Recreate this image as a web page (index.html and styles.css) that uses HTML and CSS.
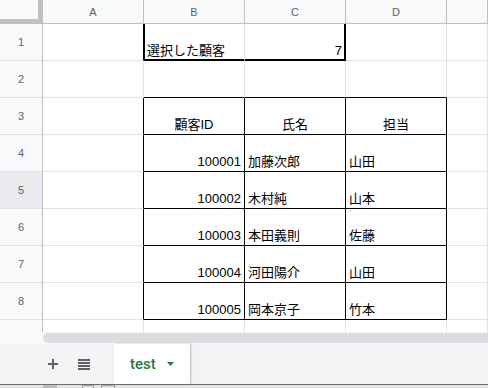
FILE: index.html
```html
<!DOCTYPE html>
<html lang="ja">
<head>
    <meta charset="UTF-8">
    <title>test</title>
    <link rel="stylesheet" href="styles.css">
</head>
<body>
    <div class="sheet">
        <div class="grid">
            <!-- column headers -->
            <div class="corner"></div>
            <div class="ch">A</div>
            <div class="ch">B</div>
            <div class="ch">C</div>
            <div class="ch">D</div>
            <div class="ch"></div>

            <!-- row 1 -->
            <div class="rh">1</div>
            <div class="c br"></div>
            <div class="c sel-l">選択した顧客</div>
            <div class="c sel-r num">7</div>
            <div class="c"></div>
            <div class="c"></div>

            <!-- row 2 -->
            <div class="rh">2</div>
            <div class="c"></div>
            <div class="c bb"></div>
            <div class="c bb"></div>
            <div class="c bb"></div>
            <div class="c"></div>

            <!-- row 3 -->
            <div class="rh">3</div>
            <div class="c br"></div>
            <div class="c br bb ctr">顧客ID</div>
            <div class="c br bb ctr">氏名</div>
            <div class="c br bb ctr">担当</div>
            <div class="c"></div>

            <!-- row 4 -->
            <div class="rh">4</div>
            <div class="c br"></div>
            <div class="c br bb num">100001</div>
            <div class="c br bb">加藤次郎</div>
            <div class="c br bb">山田</div>
            <div class="c"></div>

            <!-- row 5 -->
            <div class="rh hover">5</div>
            <div class="c br"></div>
            <div class="c br bb num">100002</div>
            <div class="c br bb">木村純</div>
            <div class="c br bb">山本</div>
            <div class="c"></div>

            <!-- row 6 -->
            <div class="rh">6</div>
            <div class="c br"></div>
            <div class="c br bb num">100003</div>
            <div class="c br bb">本田義則</div>
            <div class="c br bb">佐藤</div>
            <div class="c"></div>

            <!-- row 7 -->
            <div class="rh">7</div>
            <div class="c br"></div>
            <div class="c br bb num">100004</div>
            <div class="c br bb">河田陽介</div>
            <div class="c br bb">山田</div>
            <div class="c"></div>

            <!-- row 8 -->
            <div class="rh">8</div>
            <div class="c br"></div>
            <div class="c br bb num">100005</div>
            <div class="c br bb">岡本京子</div>
            <div class="c br bb">竹本</div>
            <div class="c"></div>

            <!-- row 9 (cut off by the scrollbar) -->
            <div class="rh"></div>
            <div class="c"></div>
            <div class="c"></div>
            <div class="c"></div>
            <div class="c"></div>
            <div class="c"></div>
        </div>

        <div class="scroll"><div class="thumb"></div></div>

        <div class="tabs">
            <div class="tab-tools">
                <svg width="10" height="10" viewBox="0 0 10 10">
                    <path d="M5 0v10M0 5h10" stroke="#5f6368" stroke-width="2"/>
                </svg>
                <svg width="12" height="11" viewBox="0 0 12 11">
                    <path d="M0 1h12M0 4h12M0 7h12M0 10h12" stroke="#5f6368" stroke-width="2"/>
                </svg>
            </div>
            <div class="tab">
                <span>test</span>
                <svg width="7" height="4" viewBox="0 0 7 4">
                    <path d="M0 0h7L3.5 4z" fill="#188038"/>
                </svg>
            </div>
        </div>

        <div class="taskbar">
            <div class="task-block"></div>
            <div class="task-icon"></div>
            <div class="task-icon wide"></div>
        </div>
    </div>
</body>
</html>
```

FILE: styles.css
```css
body {
    margin: 0;
    background: #fff;
    font-family: "Liberation Sans", "Noto Sans CJK JP", sans-serif;
    font-size: 13px;
    color: #000;
}
.sheet {
    width: 488px;
    height: 388px;
    overflow: hidden;
}
.grid {
    display: grid;
    grid-template-columns: 43px repeat(4, 101px) 41px;
    grid-template-rows: 24px repeat(9, 37px);
    height: 332px;
    overflow: hidden;
}
.grid > div {
    box-sizing: border-box;
    min-width: 0;
}
.corner {
    background: #f8f9fa;
    border-right: 5px solid #c0c0c0;
    border-bottom: 5px solid #c0c0c0;
}
.ch {
    background: #f8f9fa;
    border-right: 1px solid #c0c0c0;
    border-bottom: 1px solid #c0c0c0;
    color: #5f6368;
    font-size: 11px;
    display: flex;
    align-items: center;
    justify-content: center;
}
.rh {
    background: #f8f9fa;
    border-right: 1px solid #c0c0c0;
    border-bottom: 1px solid #e2e2e3;
    color: #5f6368;
    font-size: 11px;
    display: flex;
    align-items: center;
    justify-content: center;
}
.rh.hover { background: #e8eaed; }
.c {
    border-right: 1px solid #e2e2e3;
    border-bottom: 1px solid #e2e2e3;
    display: flex;
    align-items: flex-end;
    padding: 0 3px 1px;
    line-height: 16px;
    white-space: nowrap;
    overflow: hidden;
}
.num { justify-content: flex-end; }
.ctr { justify-content: center; }
.br { border-right-color: #000; }
.bb { border-bottom-color: #000; }
.sel-l {
    border-bottom-color: #000;
    box-shadow: inset 1px 0 #000, inset 0 -1px #000;
}
.sel-r {
    border-right-color: #000;
    border-bottom-color: #000;
    box-shadow: inset -1px 0 #000, inset 0 -1px #000;
}
.scroll {
    height: 11px;
    box-sizing: border-box;
    padding: 1px 0 0 43px;
    background: #f8f9fa;
}
.thumb {
    height: 10px;
    background: #dadce0;
    border-radius: 5px 0 0 5px;
}
.tabs {
    height: 41px;
    box-sizing: border-box;
    border-top: 1px solid #fafafa;
    background: #f1f3f4;
    display: flex;
}
.tab-tools {
    width: 114px;
    box-sizing: border-box;
    padding-left: 48px;
    display: flex;
    align-items: center;
    gap: 20px;
}
.tab {
    width: 76px;
    box-sizing: border-box;
    padding-left: 16px;
    background: #fff;
    box-shadow: 1px 0 2px rgba(60, 64, 67, 0.3);
    display: flex;
    align-items: center;
    gap: 11px;
    color: #188038;
    font-family: Roboto, "Liberation Sans", sans-serif;
    font-weight: 500;
    font-size: 15px;
}
.taskbar {
    height: 5px;
    box-sizing: border-box;
    border-top: 1px solid #6e6e6e;
    background: #e4e4e4;
    display: flex;
    align-items: flex-start;
}
.task-block {
    width: 14px;
    height: 4px;
    margin-left: 43px;
    background: #bdbdbd;
}
.task-icon {
    width: 10px;
    height: 3px;
    margin-left: 25px;
    border: 1px solid #9e9e9e;
    border-bottom: none;
}
.task-icon.wide {
    width: 12px;
    margin-left: 7px;
}
```
